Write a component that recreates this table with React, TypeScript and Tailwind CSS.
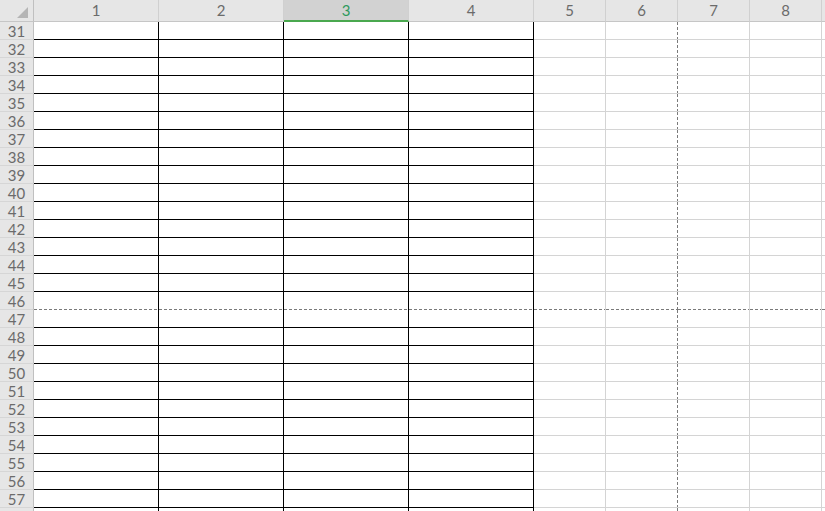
import React from "react";

const rows = Array.from({ length: 28 }, (_, i) => 31 + i);
const cols = [1, 2, 3, 4, 5, 6, 7, 8, 9];

function headerClass(c: number): string {
  if (c === 3)
    return "h-[22px] w-[125px] shrink-0 box-border border-r border-r-[#d0d0d0] border-b-2 border-b-[#4aa84f] bg-[#d2d2d2] text-[#2e9a5c] flex items-center justify-center pt-[1px]";
  if (c <= 4)
    return "h-[22px] w-[125px] shrink-0 box-border border-r border-b border-r-[#d0d0d0] border-b-[#c6c6c6] bg-[#e6e6e6] text-[#6b6b6b] flex items-center justify-center";
  return "h-[22px] w-[72px] shrink-0 box-border border-r border-b border-r-[#d0d0d0] border-b-[#c6c6c6] bg-[#e6e6e6] text-[#6b6b6b] flex items-center justify-center";
}

function cellClass(r: number, c: number): string {
  const pb = r === 46;
  if (c <= 4) {
    if (pb)
      return "h-[18px] w-[125px] shrink-0 box-border border-r border-black bg-white [background-image:linear-gradient(to_right,#7a7a7a_3px,transparent_3px)] [background-size:5px_1px] [background-repeat:repeat-x] [background-position:left_bottom]";
    return "h-[18px] w-[125px] shrink-0 box-border border-r border-b border-black bg-white";
  }
  if (c === 6) {
    if (pb)
      return "h-[18px] w-[72px] shrink-0 box-border bg-white [background-image:linear-gradient(to_right,#7a7a7a_3px,transparent_3px),linear-gradient(to_bottom,#7a7a7a_3px,transparent_3px)] [background-size:5px_1px,1px_5px] [background-repeat:repeat-x,repeat-y] [background-position:left_bottom,right_top]";
    return "h-[18px] w-[72px] shrink-0 box-border border-b border-[#d4d4d4] bg-white [background-image:linear-gradient(to_bottom,#7a7a7a_3px,transparent_3px)] [background-size:1px_5px] [background-repeat:repeat-y] [background-position:right_top]";
  }
  if (pb)
    return "h-[18px] w-[72px] shrink-0 box-border border-r border-[#d4d4d4] bg-white [background-image:linear-gradient(to_right,#7a7a7a_3px,transparent_3px)] [background-size:5px_1px] [background-repeat:repeat-x] [background-position:left_bottom]";
  return "h-[18px] w-[72px] shrink-0 box-border border-r border-b border-[#d4d4d4] bg-white";
}

export default function App() {
  return (
    <div
      className="w-[825px] h-[511px] overflow-hidden bg-white text-[15px] leading-none"
      style={{ fontFamily: "Lato, 'Open Sans', sans-serif" }}
    >
      <div className="flex">
        <div className="h-[22px] w-[34px] shrink-0 box-border border-r border-b border-r-[#c0c0c0] border-b-[#c6c6c6] bg-[#e6e6e6] flex items-end justify-end pr-[4px] pb-[3px]">
          <svg width="12" height="11" viewBox="0 0 12 11">
            <polygon points="11,0 11,11 0,11" fill="#b5b5b5" />
          </svg>
        </div>
        {cols.map((c) => (
          <div key={c} className={headerClass(c)}>
            {c <= 8 ? c : null}
          </div>
        ))}
      </div>
      {rows.map((r) => (
        <div key={r} className="flex">
          <div className="h-[18px] w-[34px] shrink-0 box-border border-r border-b border-r-[#c0c0c0] border-b-[#d6d6d6] bg-[#e6e6e6] text-[#6b6b6b] flex items-center justify-center pt-[1px]">
            {r <= 57 ? r : null}
          </div>
          {cols.map((c) => (
            <div key={c} className={cellClass(r, c)} />
          ))}
        </div>
      ))}
    </div>
  );
}
